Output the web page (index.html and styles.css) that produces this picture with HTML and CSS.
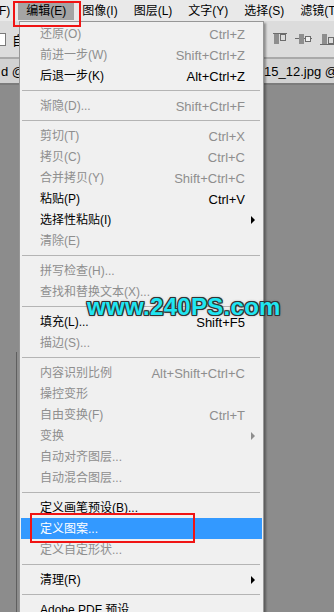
FILE: index.html
```html
<!DOCTYPE html>
<html lang="zh-CN">
<head>
    <meta charset="UTF-8">
    <meta name="viewport" content="width=device-width, initial-scale=1.0">
    <title>编辑菜单</title>
    <link rel="stylesheet" href="styles.css">
</head>
<body>
    <div class="app">
        <div class="menubar">
            <span class="mb-item mb-cut">F)</span>
            <span class="mb-item active">编辑(E)</span>
            <span class="mb-item">图像(I)</span>
            <span class="mb-item">图层(L)</span>
            <span class="mb-item">文字(Y)</span>
            <span class="mb-item">选择(S)</span>
            <span class="mb-item">滤镜(T)</span>
        </div>

        <div class="optbar">
            <span class="check"></span>
            <span class="opt-label">自</span>
            <div class="align-icons">
                <svg width="14" height="12" viewBox="0 0 14 12">
                    <rect x="0" y="0" width="14" height="1" fill="#6c6c6c"/>
                    <rect x="1" y="1" width="5" height="10" fill="#8e8e8e"/>
                    <rect x="7.5" y="1.5" width="5" height="6" fill="none" stroke="#6c6c6c"/>
                </svg>
                <svg width="17" height="12" viewBox="0 0 17 12">
                    <rect x="0" y="5" width="17" height="1" fill="#6c6c6c"/>
                    <rect x="4" y="1" width="5" height="10" fill="#8e8e8e"/>
                    <rect x="10.5" y="3.5" width="5" height="5" fill="#f0f0f0" stroke="#6c6c6c"/>
                </svg>
                <svg width="16" height="12" viewBox="0 0 16 12">
                    <rect x="2" y="1" width="5" height="10" fill="#8e8e8e"/>
                    <rect x="8.5" y="4.5" width="5" height="6" fill="none" stroke="#6c6c6c"/>
                    <rect x="0" y="11" width="16" height="1" fill="#6c6c6c"/>
                </svg>
            </div>
        </div>

        <div class="tabs">
            <span class="tab-left">d @</span>
            <span class="tab-right">15_12.jpg @ 100%</span>
        </div>

        <div class="canvas"></div>
        <div class="panel-edge"></div>

        <div class="dropdown">
            <div class="mi off"><span>还原(O)</span><span class="key">Ctrl+Z</span></div>
            <div class="mi off"><span>前进一步(W)</span><span class="key">Shift+Ctrl+Z</span></div>
            <div class="mi"><span>后退一步(K)</span><span class="key">Alt+Ctrl+Z</span></div>
            <div class="sep"></div>
            <div class="mi off"><span>渐隐(D)...</span><span class="key">Shift+Ctrl+F</span></div>
            <div class="sep"></div>
            <div class="mi off"><span>剪切(T)</span><span class="key">Ctrl+X</span></div>
            <div class="mi off"><span>拷贝(C)</span><span class="key">Ctrl+C</span></div>
            <div class="mi off"><span>合并拷贝(Y)</span><span class="key">Shift+Ctrl+C</span></div>
            <div class="mi"><span>粘贴(P)</span><span class="key">Ctrl+V</span></div>
            <div class="mi sub"><span>选择性粘贴(I)</span></div>
            <div class="mi off"><span>清除(E)</span></div>
            <div class="sep"></div>
            <div class="mi off"><span>拼写检查(H)...</span></div>
            <div class="mi off"><span>查找和替换文本(X)...</span></div>
            <div class="sep"></div>
            <div class="mi"><span>填充(L)...</span><span class="key">Shift+F5</span></div>
            <div class="mi off"><span>描边(S)...</span></div>
            <div class="sep"></div>
            <div class="mi off"><span>内容识别比例</span><span class="key">Alt+Shift+Ctrl+C</span></div>
            <div class="mi off"><span>操控变形</span></div>
            <div class="mi off"><span>自由变换(F)</span><span class="key">Ctrl+T</span></div>
            <div class="mi off sub"><span>变换</span></div>
            <div class="mi off"><span>自动对齐图层...</span></div>
            <div class="mi off"><span>自动混合图层...</span></div>
            <div class="sep"></div>
            <div class="mi"><span>定义画笔预设(B)...</span></div>
            <div class="mi hl"><span>定义图案...</span></div>
            <div class="mi off"><span>定义自定形状...</span></div>
            <div class="sep"></div>
            <div class="mi sub"><span>清理(R)</span></div>
            <div class="sep"></div>
            <div class="mi"><span>Adobe PDF 预设</span></div>
        </div>

        <div class="red-box box-menu"></div>
        <div class="red-box box-item"></div>

        <div class="watermark">www.240PS.com</div>
    </div>
</body>
</html>
```

FILE: styles.css
```css
body {
    margin: 0;
    padding: 0;
    font-family: 'Liberation Sans', 'Noto Sans CJK SC', sans-serif;
    font-size: 12px;
    color: #000000;
}

.app {
    position: relative;
    width: 334px;
    height: 612px;
    overflow: hidden;
    display: flex;
    flex-direction: column;
    background-color: #8c8c8c;
}

/* top menu bar */
.menubar {
    height: 21px;
    padding-top: 3px;
    box-sizing: border-box;
    display: flex;
    align-items: flex-start;
    background-color: #e9e9e9;
    white-space: nowrap;
}

.mb-item {
    height: 17px;
    line-height: 17px;
    padding: 0 8px;
    flex-shrink: 0;
}

.mb-cut {
    padding-left: 0;
    margin-left: -1px;
}

.mb-item.active {
    background-color: #a4a4a4;
}

/* options bar */
.optbar {
    height: 36px;
    display: flex;
    align-items: center;
    background-color: #dcdcdc;
}

.check {
    width: 11px;
    height: 11px;
    margin-left: -7px;
    border: 1px solid #7a7a7a;
    background-color: #ffffff;
}

.opt-label {
    margin-left: 6px;
    font-size: 13px;
}

.align-icons {
    margin-left: auto;
    display: flex;
    align-items: center;
    gap: 8px;
    margin-right: -2px;
}

/* document tabs */
.tabs {
    height: 24px;
    display: flex;
    align-items: center;
    border-top: 2px solid #a9a9a9;
    border-bottom: 2px solid #7b7b7b;
    background-color: #d2d2d2;
    font-size: 13px;
    white-space: nowrap;
}

.tab-left {
    padding-left: 1px;
    width: 263px;
    flex-shrink: 0;
}

.canvas {
    flex: 1;
    background-color: #8c8c8c;
}

.panel-edge {
    position: absolute;
    left: 16px;
    top: 352px;
    width: 1px;
    height: 260px;
    background-color: #5f5f5f;
}

/* edit dropdown */
.dropdown {
    position: absolute;
    left: 19px;
    top: 21px;
    width: 245px;
    height: 620px;
    box-sizing: border-box;
    padding: 1px 0;
    background-color: #f0f0f0;
    border: 1px solid #979797;
    box-shadow: 2px 2px 2px rgba(0, 0, 0, 0.35);
}

.mi {
    position: relative;
    height: 21px;
    line-height: 23px;
    padding: 0 18px 0 20px;
    display: flex;
    justify-content: space-between;
    white-space: nowrap;
}

.mi.off {
    color: #8e8e8e;
}

.key {
    font-size: 13px;
}

.mi.sub::after {
    content: "";
    position: absolute;
    right: 8px;
    top: 7px;
    border-left: 4px solid #000000;
    border-top: 4px solid transparent;
    border-bottom: 4px solid transparent;
}

.mi.off.sub::after {
    border-left-color: #8e8e8e;
}

.mi.hl {
    margin: 0 1px;
    padding-left: 19px;
    background-color: #3399ff;
    color: #ffffff;
}

.sep {
    position: relative;
    height: 9px;
    margin: 0 3px 0 2px;
}

.sep::before {
    content: "";
    position: absolute;
    left: 0;
    right: 0;
    top: 4px;
    height: 1px;
    background-color: #b4b4b4;
}

/* annotation boxes */
.red-box {
    position: absolute;
    border: 2px solid #f01414;
    box-sizing: border-box;
}

.box-menu {
    left: 13px;
    top: 1px;
    width: 68px;
    height: 26px;
}

.box-item {
    left: 30px;
    top: 513px;
    width: 165px;
    height: 30px;
}

.watermark {
    position: absolute;
    left: 87px;
    top: 295px;
    font-family: 'Liberation Sans', sans-serif;
    font-weight: bold;
    font-size: 24px;
    line-height: 1;
    letter-spacing: 0.3px;
    color: #20e6f2;
    text-shadow: 1px 1px 0 #333333, -1px -1px 0 #333333, 1px -1px 0 #333333, -1px 1px 0 #333333,
        0 1px 0 #333333, 0 -1px 0 #333333, 1px 0 0 #333333, -1px 0 0 #333333, 0 0 3px #444444;
}
```
